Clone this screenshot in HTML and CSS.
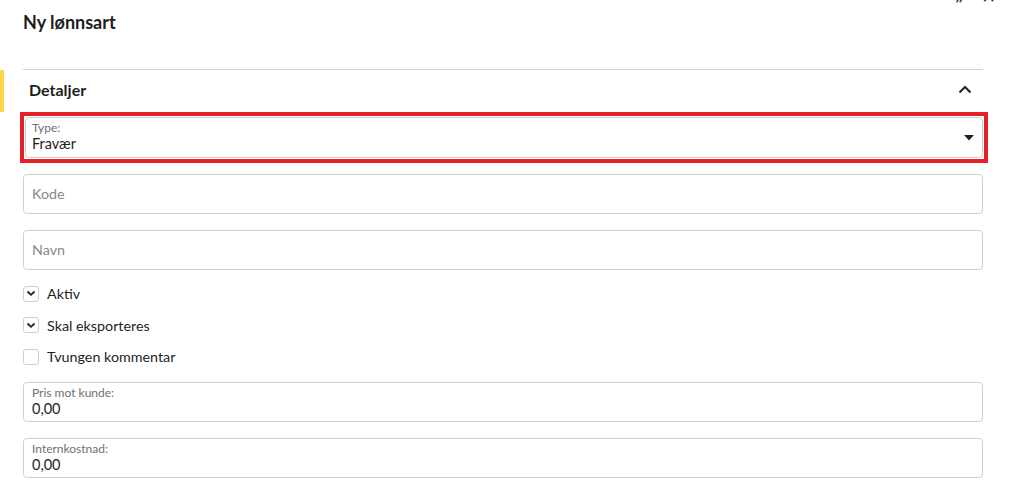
FILE: index.html
```html
<!DOCTYPE html>
<html lang="no">
<head>
<meta charset="utf-8">
<title>Ny lønnsart</title>
<link rel="stylesheet" href="styles.css">
</head>
<body>
<div class="topicons">
  <span class="ticon">&raquo;</span>
  <span class="ticon">&times;</span>
</div>
<div class="page">
  <h1 class="title">Ny lønnsart</h1>
  <section class="section">
    <div class="section-head">
      <span class="section-title">Detaljer</span>
      <svg class="chev" width="14" height="9" viewBox="0 0 14 9"><path d="M1.5 7.5 L7 2 L12.5 7.5" fill="none" stroke="#222" stroke-width="2"/></svg>
    </div>
    <div class="highlight">
      <div class="field select">
        <div class="field-text">
          <span class="flabel">Type:</span>
          <span class="fvalue">Fravær</span>
        </div>
        <svg class="caret" width="10" height="6" viewBox="0 0 10 6"><path d="M0 0 H10 L5 5.5 Z" fill="#222"/></svg>
      </div>
    </div>
    <div class="field plain gap"><span class="placeholder">Kode</span></div>
    <div class="field plain gap"><span class="placeholder">Navn</span></div>
    <div class="checks">
      <label class="check"><span class="box on"><svg width="10" height="7" viewBox="0 0 10 7"><path d="M1.5 1.5 L5 4.8 L8.5 1.5" fill="none" stroke="#222" stroke-width="1.8"/></svg></span>Aktiv</label>
      <label class="check"><span class="box on"><svg width="10" height="7" viewBox="0 0 10 7"><path d="M1.5 1.5 L5 4.8 L8.5 1.5" fill="none" stroke="#222" stroke-width="1.8"/></svg></span>Skal eksporteres</label>
      <label class="check"><span class="box"></span>Tvungen kommentar</label>
    </div>
    <div class="field labeled first-num">
      <span class="flabel">Pris mot kunde:</span>
      <span class="fvalue">0,00</span>
    </div>
    <div class="field labeled gap">
      <span class="flabel">Internkostnad:</span>
      <span class="fvalue">0,00</span>
    </div>
  </section>
</div>
</body>
</html>
```

FILE: styles.css
```css
* { box-sizing: border-box; }
html, body { margin: 0; padding: 0; background: #fff; }
body {
  font-family: Lato, "Open Sans", Arial, sans-serif;
  color: #1e1e1e;
  width: 1019px;
  height: 502px;
  overflow: hidden;
  position: relative;
}
.topicons {
  position: absolute;
  top: -13px;
  right: 24px;
  display: flex;
  gap: 18px;
  font-size: 22px;
  line-height: 18px;
  color: #333;
}
.page {
  width: 983px;
  padding-left: 23px;
}
.title {
  margin: 0;
  padding-top: 12px;
  height: 69px;
  font-size: 18px;
  line-height: 20px;
  font-weight: 700;
}
.section {
  border-top: 1px solid #d2d2d2;
  position: relative;
}
.section-head {
  position: relative;
  height: 41px;
  display: flex;
  align-items: center;
  justify-content: space-between;
  padding-left: 6px;
  padding-right: 11px;
  padding-bottom: 3px;
}
.section-head::before {
  content: "";
  position: absolute;
  left: -23px;
  top: 0;
  width: 4px;
  height: 42px;
  background: #ffd54a;
}
.section-title {
  font-size: 16px;
  font-weight: 700;
}
.chev { display: block; }
.highlight {
  margin-top: 6px;
  margin-left: 2px;
  width: 958px;
  outline: 4px solid #e52128;
  outline-offset: 1px;
}
.field {
  border: 1px solid #cfcfcf;
  border-radius: 4px;
  height: 40px;
  background: #fff;
}
.field.gap { margin-top: 16px; }
.select {
  height: 41px;
  display: flex;
  align-items: center;
  justify-content: space-between;
  padding: 0 8px 2px 6px;
}
.field-text { display: flex; flex-direction: column; }
.flabel {
  font-size: 12px;
  line-height: 14px;
  color: #707070;
}
.fvalue {
  font-size: 14.5px;
  line-height: 17px;
  color: #1e1e1e;
}
.caret { display: block; margin-top: 2px; }
.plain {
  display: flex;
  align-items: center;
  padding-left: 8px;
  padding-bottom: 2px;
}
.placeholder {
  font-size: 14.3px;
  color: #8a8a8a;
}
.checks {
  margin-top: 8px;
  display: flex;
  flex-direction: column;
}
.check {
  height: 31.5px;
  display: flex;
  align-items: center;
  font-size: 14.3px;
  color: #1e1e1e;
}
.box {
  width: 16px;
  height: 16px;
  border: 1px solid #cfcfcf;
  border-radius: 3px;
  margin-right: 8px;
  display: flex;
  align-items: center;
  justify-content: center;
}
.box svg { display: block; }
.labeled {
  display: flex;
  flex-direction: column;
  justify-content: center;
  padding-left: 8px;
  padding-bottom: 1px;
}
.first-num { margin-top: 9px; }
```
